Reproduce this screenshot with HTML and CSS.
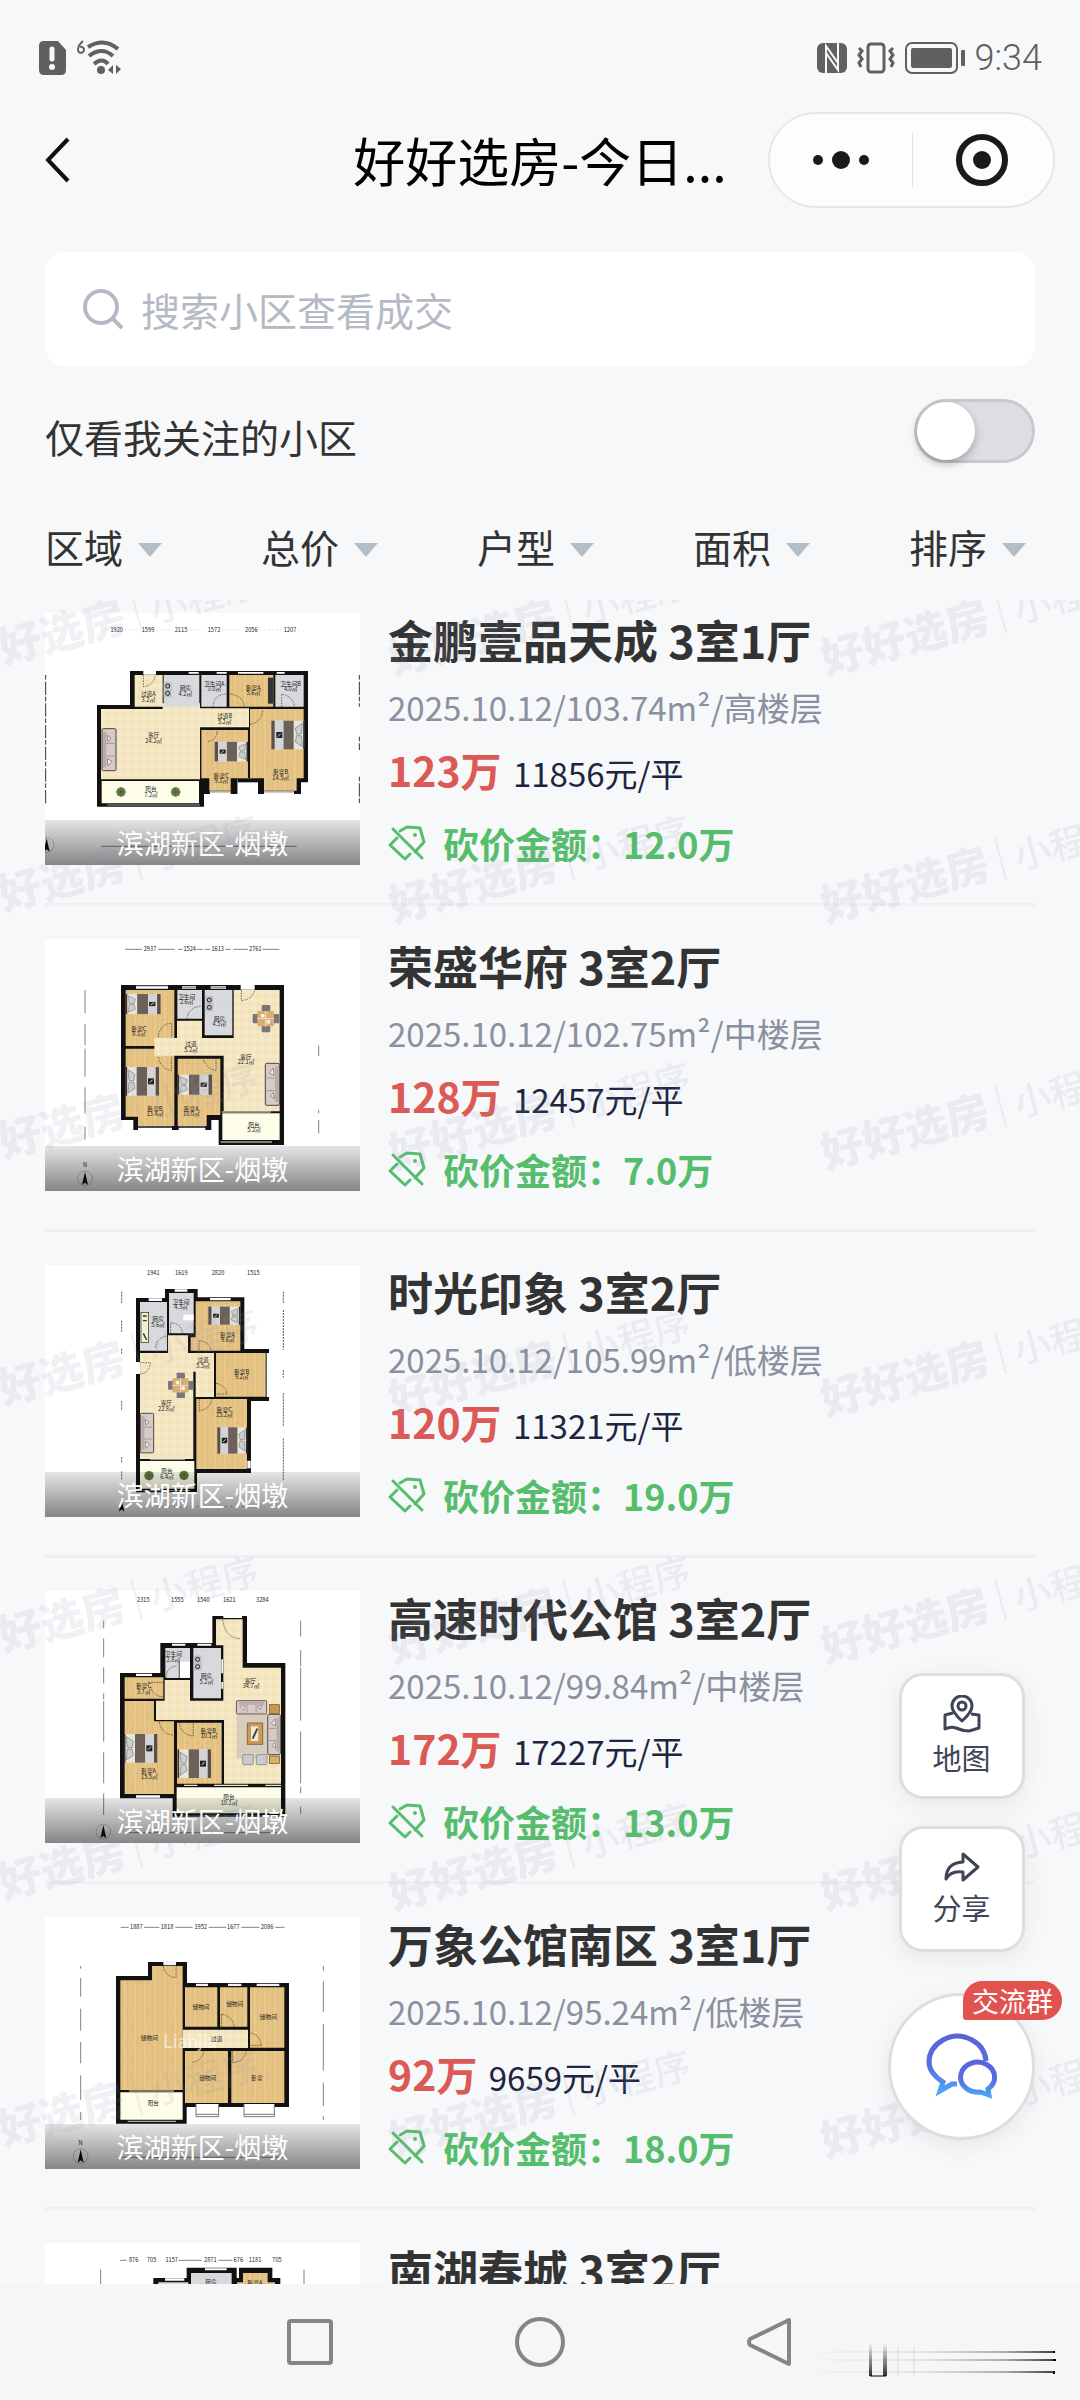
FILE: index.html
```html
<!DOCTYPE html>
<html lang="zh-CN">
<head>
  <meta charset="UTF-8">
  <meta name="viewport" content="width=device-width, initial-scale=1.0">
  <title>好好选房-今日成交</title>
  <link rel="stylesheet" href="styles.css">
</head>
<body>
<!-- shared drawings for the floor plans -->
<svg class="defs" width="0" height="0" aria-hidden="true">
  <defs>
    <pattern id="wood" width="30" height="90" patternUnits="userSpaceOnUse">
      <rect width="30" height="90" fill="#e5c384"/>
      <path d="M8 0V90M22 0V90" stroke="#dfb974" stroke-width="2"/>
      <path d="M15 0V90" stroke="#ecce94" stroke-width="3"/>
      <path d="M0 30H15M15 70H30" stroke="#d3a962" stroke-width="1"/>
    </pattern>
    <pattern id="tile" width="24" height="24" patternUnits="userSpaceOnUse">
      <rect width="24" height="24" fill="#f5e9c8"/>
      <path d="M0 12L12 0L24 12L12 24Z" fill="#f2e3bb"/>
    </pattern>
    <pattern id="grey" width="20" height="20" patternUnits="userSpaceOnUse">
      <rect width="20" height="20" fill="#d9dadd"/>
      <path d="M0 0H20M0 0V20" stroke="#cbccd1"/>
    </pattern>
    <linearGradient id="chat" x1="0" y1="0" x2="0" y2="1">
      <stop offset="0" stop-color="#5a62d8"/>
      <stop offset="0.6" stop-color="#5573e2"/>
      <stop offset="1" stop-color="#4fa3f7"/>
    </linearGradient>
    <g id="bed">
      <rect width="98" height="86" fill="#e9e5dc"/>
      <path d="M0 0V86" stroke="#3a2f2b" stroke-width="5"/>
      <path d="M5 8L26 22L22 42L8 40Z M5 78L26 64L22 46L8 46Z" fill="#c9d0d4" stroke="#777" stroke-width="2"/>
      <rect x="31" width="31" height="86" fill="#6d6058"/>
      <rect x="62" width="26" height="86" fill="#d4d4d6"/>
      <rect x="88" width="10" height="86" fill="#5b5049"/>
      <rect x="65" y="34" width="18" height="18" fill="#222"/>
      <path d="M70 47L79 38" stroke="#ddd" stroke-width="3"/>
    </g>
    <g id="sofa">
      <rect width="42" height="126" rx="4" fill="#d6cbc6" stroke="#4c4240" stroke-width="3"/>
      <rect x="3" y="10" width="10" height="106" fill="#b9aca8"/>
      <path d="M13 44H38M13 82H38" stroke="#8a7d7a" stroke-width="2"/>
      <path d="M15 20L27 28L18 38ZM16 90L30 98L18 112Z" fill="#f3efee" stroke="#6b605f" stroke-width="2"/>
    </g>
    <g id="dining">
      <rect x="27" y="0" width="26" height="82" rx="3" fill="#77777c"/>
      <rect x="0" y="27" width="80" height="28" rx="3" fill="#77777c"/>
      <rect x="14" y="18" width="50" height="46" rx="3" fill="#d9ad74"/>
      <path d="M14 41H64M39 18V64" stroke="#f3dfbd" stroke-width="3"/>
      <circle cx="30" cy="32" r="6" fill="#f8f2e4"/>
      <circle cx="47" cy="50" r="6" fill="#f8f2e4"/>
    </g>
    <g id="plant">
      <circle r="14" fill="#71844f"/>
      <path d="M0 -14V14M-14 0H14M-10 -10L10 10M-10 10L10 -10" stroke="#4e6330" stroke-width="3"/>
    </g>
    <g id="stove">
      <rect width="24" height="46" fill="#bfc0c5"/>
      <circle cx="12" cy="12" r="6" fill="none" stroke="#222" stroke-width="3"/>
      <circle cx="12" cy="34" r="6" fill="none" stroke="#222" stroke-width="3"/>
    </g>
    <g id="north">
      <circle r="22" fill="none" stroke="#666" stroke-width="1"/>
      <path d="M0 -20L9 20L0 13L-9 20Z" fill="#111"/>
    </g>
    <g id="tag" fill="none" stroke="#56bd6c" stroke-width="3" stroke-linejoin="round" stroke-linecap="round">
      <path d="M12 6L19 2L32 3L36 17L27 27"/>
      <path d="M9 13L2 20L17 34L22 29"/>
      <path d="M5 4L34 33"/>
      <circle cx="27" cy="10" r="2" fill="#56bd6c" stroke="none"/>
    </g>
  </defs>
</svg>

<div class="screen">
  <div class="status">
    <div class="status-side">
      <svg width="28" height="34" viewBox="0 0 28 34">
        <path d="M5 0H19L27 9V29Q27 34 22 34H5Q0 34 0 29V5Q0 0 5 0Z" fill="#606060"/>
        <path d="M13 8V18" stroke="#f7f8fa" stroke-width="5" stroke-linecap="round"/>
        <circle cx="13" cy="26" r="3" fill="#f7f8fa"/>
      </svg>
      <svg width="46" height="36" viewBox="0 0 46 36">
        <g fill="none" stroke="#606060">
          <path d="M6 1Q1 5 1 10A3 3 0 1 0 3 7" stroke-width="2"/>
          <path d="M11 7Q27 -3 41 9" stroke-width="4"/>
          <path d="M12 16Q25 6 36 16" stroke-width="4"/>
          <path d="M17 24Q25 17 31 24" stroke-width="4"/>
        </g>
        <circle cx="24" cy="30" r="4" fill="#606060"/>
        <path d="M36 25V34L31 30ZM39 25V34L44 29Z" fill="#606060"/>
      </svg>
    </div>
    <div class="status-side">
      <svg width="30" height="30" viewBox="0 0 30 30">
        <rect width="30" height="30" rx="6" fill="#606060"/>
        <path d="M9 30V3L21 20V9M21 0V27L9 10V21" fill="none" stroke="#f7f8fa" stroke-width="2"/>
      </svg>
      <svg width="38" height="32" viewBox="0 0 38 32" fill="none" stroke="#606060">
        <rect x="11" y="2" width="16" height="28" rx="3" stroke-width="3"/>
        <path d="M2 6L5 9L2 13L5 17L2 21L4 25M36 6L33 9L36 13L33 17L36 21L34 25" stroke-width="3"/>
      </svg>
      <svg width="60" height="32" viewBox="0 0 60 32">
        <rect x="1" y="1" width="51" height="30" rx="6" fill="none" stroke="#606060" stroke-width="2"/>
        <rect x="6" y="6" width="41" height="20" rx="2" fill="#606060"/>
        <rect x="56" y="8" width="4" height="16" rx="1" fill="#606060"/>
      </svg>
      <span class="clock">9:34</span>
    </div>
  </div>

  <header class="header">
    <button type="button" class="back" aria-label="返回">
      <svg width="26" height="46" viewBox="0 0 26 46"><path d="M23 2L3 23L23 44" fill="none" stroke="#111" stroke-width="4"/></svg>
    </button>
    <h1>好好选房-今日...</h1>
    <div class="capsule">
      <button type="button" aria-label="更多">
        <svg width="58" height="20" viewBox="0 0 58 20" fill="#1a1a1a"><circle cx="6" cy="10" r="5"/><circle cx="29" cy="10" r="9"/><circle cx="52" cy="10" r="5"/></svg>
      </button>
      <button type="button" aria-label="关闭">
        <svg width="54" height="54" viewBox="0 0 54 54"><circle cx="27" cy="27" r="23" fill="none" stroke="#1a1a1a" stroke-width="6"/><circle cx="27" cy="27" r="9" fill="#1a1a1a"/></svg>
      </button>
    </div>
  </header>

  <label class="search">
    <svg width="42" height="42" viewBox="0 0 42 42" fill="none" stroke="#b4bac4" stroke-width="4"><circle cx="19" cy="19" r="16"/><path d="M31 31L40 40"/></svg>
    <input type="search" placeholder="搜索小区查看成交" aria-label="搜索小区查看成交">
  </label>

  <div class="follow">
    <label for="follow">仅看我关注的小区</label>
    <input type="checkbox" id="follow" class="switch">
  </div>

  <div class="filters">
    <label><select aria-label="区域"><option>区域</option></select></label>
    <label><select aria-label="总价"><option>总价</option></select></label>
    <label><select aria-label="户型"><option>户型</option></select></label>
    <label><select aria-label="面积"><option>面积</option></select></label>
    <label><select aria-label="排序"><option>排序</option></select></label>
  </div>

  <main class="list">
    <article class="house">
      <div class="thumb">
        <svg viewBox="135 69 945 756">
          <path d="M390 243H924V577H903V612H882V604H792V612H774V565H713V612H692V604H630V612H612V650H291V345H390Z" fill="#111"/>
          <path d="M404 255H488V350H404ZM303 357H600V568H303ZM488 340H600V400H488ZM600 355H747V412H600Z" fill="url(#tile)"/>
          <path d="M491 255H598V350H491ZM604 255H680V350H604ZM826 255H911V350H826Z" fill="url(#grey)"/>
          <path d="M688 255H820V350H688ZM604 420H744V565H692V602H628V565H604ZM750 357H911V565H890V602H792V565H750Z" fill="url(#wood)"/>
          <path d="M713 568H774V614H713Z" fill="#fff"/>
          <path d="M713 565H774V577H713Z" fill="#111"/>
          <path d="M305 573H597V640H305Z" fill="#fdfde9"/>
          <path d="M430 243H468V254H430ZM566 246H596V251H566ZM650 246H680V251H650ZM714 246H790V251H714ZM830 246H854V251H830Z" fill="#fff"/>
          <path d="M322 645H600M628 606H692M792 606H882" stroke="#999" stroke-width="3"/>
          <g fill="none" stroke="#333" stroke-width="2" stroke-dasharray="5 3">
            <path d="M430 255V290Q460 288 466 255M640 350Q640 315 678 312M690 312Q730 318 733 350M845 350V312Q878 318 884 350M750 403Q784 398 788 362M625 455Q650 450 652 420"/>
          </g>
          <use href="#stove" transform="translate(491 276)"/>
          <rect x="804" y="263" width="15" height="78" fill="#333"/>
          <use href="#sofa" transform="translate(306 416)"/>
          <use href="#bed" transform="translate(912 478) rotate(180)"/>
          <use href="#bed" transform="translate(742 514) rotate(180) scale(1 .68)"/>
          <use href="#plant" transform="translate(363 606)"/>
          <use href="#plant" transform="translate(527 606)"/>
          <path d="M137 255V640M1078 255V350M1078 440V480M1078 560V640" stroke="#333" stroke-width="3" stroke-dasharray="14 6 40 5"/>
          <g class="plan-text">
            <text x="445" y="318">过道A</text><text x="445" y="336">3.2㎡</text>
            <text x="556" y="300">厨房</text><text x="556" y="317">4.2㎡</text>
            <text x="643" y="287">卫生间A</text><text x="643" y="304">3.0㎡</text>
            <text x="760" y="300">卧室A</text><text x="760" y="316">5.6㎡</text>
            <text x="872" y="287">卫生间B</text><text x="872" y="304">4.0㎡</text>
            <text x="674" y="385">过道B</text><text x="674" y="402">5.2㎡</text>
            <text x="461" y="441">客厅</text><text x="461" y="459">24.2㎡</text>
            <text x="664" y="563">卧室C</text><text x="664" y="580">9.1㎡</text>
            <text x="842" y="552">卧室B</text><text x="842" y="569">14.5㎡</text>
            <text x="453" y="604">阳台</text><text x="453" y="621">7.2㎡</text>
            <text x="350" y="126">1920</text><text x="444" y="126">1599</text><text x="543" y="126">2115</text><text x="642" y="126">1572</text><text x="754" y="126">2056</text><text x="870" y="126">1207</text>
          </g>
          <path d="M304 120H324M374 120H418M470 120H516M570 120H616M666 120H724M780 120H844M896 120H912" stroke="#999" stroke-dasharray="4 8"/>
          <path d="M304 769H890" stroke="#444" stroke-width="2"/>
          <use href="#north" transform="translate(140 765)"/>
        </svg>
        <span>滨湖新区-烟墩</span>
      </div>
      <div class="info">
        <h2>金鹏壹品天成 3室1厅</h2>
        <p class="meta"><span>2025.10.12</span><i>/</i><span>103.74m²</span><i>/</i><span>高楼层</span></p>
        <p class="price"><b>123万</b> 11856元/平</p>
        <p class="cut"><svg width="38" height="36" viewBox="0 0 38 36"><use href="#tag"/></svg>砍价金额：12.0万</p>
      </div>
    </article>

    <article class="house">
      <div class="thumb">
        <svg viewBox="45 57 945 756">
          <path d="M273 195H762V675H566V600H544V630H526V624H446V630H426V624H324V630H310V600H273Z" fill="#111"/>
          <path d="M287 210H433V378H287ZM287 386H433V618H324V590H287ZM443 416H571V585H530V618H443Z" fill="url(#wood)"/>
          <path d="M442 210H516V296H442ZM524 210H607V346H524Z" fill="url(#grey)"/>
          <path d="M611 210H749V574H581V354H611ZM373 354H590V407H373ZM441 302H516V360H441Z" fill="url(#tile)"/>
          <path d="M577 580H749V660H577Z" fill="#fdfde9"/>
          <path d="M318 198H414V206H318ZM456 199H498V206H456ZM542 199H588V206H542ZM632 195H674V209H632Z" fill="#fff"/>
          <path d="M318 198H414M456 203H498M542 203H588M324 621H426M446 621H526" stroke="#888" stroke-width="3"/>
          <path d="M572 666H726M575 576H722" stroke="#f4efd8" stroke-width="3"/>
          <g fill="none" stroke="#333" stroke-width="2" stroke-dasharray="5 3">
            <path d="M385 352Q390 310 425 310V352M471 296Q475 262 514 258M634 210V242Q668 238 674 210M386 412Q390 445 424 452V412M520 412Q524 445 558 452V412"/>
          </g>
          <use href="#stove" transform="translate(526 228)"/>
          <use href="#bed" transform="translate(289 222) scale(1.05 .7)"/>
          <use href="#bed" transform="translate(289 441)"/>
          <use href="#bed" transform="translate(445 464) scale(1.03 .7)"/>
          <use href="#dining" transform="translate(668 255)"/>
          <use href="#sofa" transform="translate(748 556) rotate(180)"/>
          <g class="plan-text">
            <text x="327" y="332">卧室C</text><text x="327" y="348">8.1㎡</text>
            <text x="470" y="236">卫生间</text><text x="470" y="253">2.6㎡</text>
            <text x="568" y="302">厨房</text><text x="568" y="319">4.5㎡</text>
            <text x="483" y="379">过道</text><text x="483" y="396">5.2㎡</text>
            <text x="648" y="416">客厅</text><text x="648" y="433">22.1㎡</text>
            <text x="375" y="572">卧室B</text><text x="375" y="589">13.4㎡</text>
            <text x="484" y="572">卧室A</text><text x="484" y="589">10.0㎡</text>
            <text x="672" y="620">阳台</text><text x="672" y="637">5.2㎡</text>
            <text x="360" y="94">2937</text><text x="479" y="94">1524</text><text x="563" y="94">1613</text><text x="676" y="94">2761</text>
            <text x="165" y="740">N</text>
          </g>
          <path d="M285 88H336M384 88H434M444 88H458M500 88H518M524 88H540M586 88H602M610 88H654M698 88H748M165 210V280M165 312V376M165 386V470M165 502V580M165 620V658M866 570V580M866 600V640M866 376V408" stroke="#444" stroke-width="2"/>
          <use href="#north" transform="translate(165 775)"/>
        </svg>
        <span>滨湖新区-烟墩</span>
      </div>
      <div class="info">
        <h2>荣盛华府 3室2厅</h2>
        <p class="meta"><span>2025.10.12</span><i>/</i><span>102.75m²</span><i>/</i><span>中楼层</span></p>
        <p class="price"><b>128万</b> 12457元/平</p>
        <p class="cut"><svg width="38" height="36" viewBox="0 0 38 36"><use href="#tag"/></svg>砍价金额：7.0万</p>
      </div>
    </article>

    <article class="house">
      <div class="thumb">
        <svg viewBox="45 45 945 756">
          <path d="M318 144H405V117H503V142H643V297H717V309H710V441H717V453H663V669H501V727H318V372H329V336H318Z" fill="#111"/>
          <path d="M330 156H411V302H330ZM417 129H491V250H417Z" fill="url(#grey)"/>
          <path d="M497 154H631V302H482V262H497ZM558 309H707V440H558ZM499 447H651V657H499Z" fill="url(#wood)"/>
          <path d="M330 309H414V256H474V309H552V441H497V365H490V627H330Z" fill="url(#tile)"/>
          <path d="M330 633H493V716H330Z" fill="#fdfde9"/>
          <path d="M318 337H330V372H318ZM356 145H396V153H356ZM434 118H472V125H434ZM540 144H602V151H540ZM652 632H662V655H652Z" fill="#fff"/>
          <path d="M360 629H465M340 722H480" stroke="#aaa" stroke-width="3"/>
          <g fill="none" stroke="#333" stroke-width="2" stroke-dasharray="5 3">
            <path d="M330 338H362Q356 370 330 372M376 294Q380 262 412 258M422 250V218Q455 222 458 250M507 300V272Q540 276 543 302M558 400Q586 404 590 432H558M508 447V482Q540 478 545 447"/>
          </g>
          <rect x="333" y="187" width="23" height="90" fill="#f1f0c9" stroke="#222" stroke-width="2"/>
          <path d="M339 198H350M339 212H350M340 250L350 270" stroke="#333" stroke-width="4"/>
          <rect x="460" y="194" width="31" height="17" fill="#fff"/>
          <use href="#bed" transform="translate(629 224) rotate(180) scale(.96 .63)"/>
          <use href="#bed" transform="translate(650 611) rotate(180) scale(.9 .92)"/>
          <use href="#dining" transform="translate(414 368) scale(.96 .93)"/>
          <use href="#sofa" transform="translate(331 490) scale(.95 .94)"/>
          <use href="#plant" transform="translate(357 677)"/>
          <use href="#plant" transform="translate(462 676)"/>
          <g class="plan-text">
            <text x="384" y="213">厨房</text><text x="384" y="230">5.6㎡</text>
            <text x="453" y="161">卫生间</text><text x="453" y="177">4.3㎡</text>
            <text x="593" y="260">卧室A</text><text x="593" y="276">9.6㎡</text>
            <text x="635" y="371">卧室B</text><text x="635" y="388">9.2㎡</text>
            <text x="519" y="337">过道</text><text x="519" y="353">5.5㎡</text>
            <text x="409" y="466">客厅</text><text x="409" y="483">22.8㎡</text>
            <text x="583" y="485">卧室C</text><text x="583" y="501">15.2㎡</text>
            <text x="411" y="670">阳台</text><text x="411" y="686">6.4㎡</text>
            <text x="370" y="76">1941</text><text x="454" y="76">1619</text><text x="564" y="76">2820</text><text x="670" y="76">1515</text>
          </g>
          <path d="M275 125V158M275 212V246M275 296V312M275 454V482M275 622V640M275 664V690M760 125V160M760 180V300M760 360V382M760 430V530M760 566V690" stroke="#555" stroke-width="3" stroke-dasharray="6 3"/>
          <path d="M330 770H705" stroke="#555" stroke-width="2" stroke-dasharray="5 12"/>
          <path d="M275 750L283 785L275 778L267 785Z"/>
        </svg>
        <span>滨湖新区-烟墩</span>
      </div>
      <div class="info">
        <h2>时光印象 3室2厅</h2>
        <p class="meta"><span>2025.10.12</span><i>/</i><span>105.99m²</span><i>/</i><span>低楼层</span></p>
        <p class="price"><b>120万</b> 11321元/平</p>
        <p class="cut"><svg width="38" height="36" viewBox="0 0 38 36"><use href="#tag"/></svg>砍价金额：19.0万</p>
      </div>
    </article>

    <article class="house">
      <div class="thumb">
        <svg viewBox="45 63 945 756">
          <path d="M547 138H651V279H766V740H428V685H270V309H391V219H547Z" fill="#111"/>
          <path d="M284 322H400V386H284ZM284 393H372V454H432V672H284ZM441 458H575V641H441Z" fill="url(#wood)"/>
          <path d="M406 234H480V324H406ZM490 234H573V385H490Z" fill="url(#grey)"/>
          <path d="M558 148H638V293H753V641H582V450H378V392H404V330H480V392H580V226H558Z" fill="url(#tile)"/>
          <path d="M440 652H753V730H440Z" fill="#fdfde9"/>
          <path d="M580 138H636V144H580ZM318 311H366V318H318ZM426 221H466V227H426ZM502 221H544V227H502ZM318 676H390V683H318ZM574 268H579V310H574ZM574 336H579V356H574Z" fill="#fff"/>
          <path d="M462 646H502M552 646H654M706 646H753" stroke="#eee3c0" stroke-width="4"/>
          <path d="M450 738H750" stroke="#777" stroke-width="3"/>
          <g fill="none" stroke="#333" stroke-width="2" stroke-dasharray="5 3">
            <path d="M578 150Q586 204 630 206M408 324Q410 290 440 288M355 337H400M362 350Q370 380 400 380M388 456Q394 492 428 495M448 458Q452 494 490 498V458"/>
          </g>
          <path d="M448 275V326H480" fill="none" stroke="#111" stroke-width="3"/>
          <rect x="449" y="275" width="31" height="48" fill="#fff"/>
          <use href="#stove" transform="translate(491 256)"/>
          <use href="#bed" transform="translate(284 492)"/>
          <use href="#bed" transform="translate(445 538)"/>
          <rect x="620" y="432" width="92" height="134" fill="#d6cdbd"/>
          <rect x="652" y="459" width="46" height="64" fill="#c89a58" stroke="#8c6937" stroke-width="3"/>
          <rect x="663" y="469" width="22" height="44" fill="#efe8d8"/>
          <path d="M668 506L682 476" stroke="#3d4a35" stroke-width="6"/>
          <use href="#sofa" transform="translate(710 392) rotate(90) scale(.95 .72)"/>
          <use href="#sofa" transform="translate(751 554) rotate(180) scale(.9 .96)"/>
          <rect x="718" y="404" width="30" height="26" fill="#c69853" stroke="#6b4b1d" stroke-width="2"/>
          <rect x="718" y="558" width="30" height="22" fill="#d9b06c" stroke="#6b4b1d" stroke-width="2"/>
          <rect x="638" y="554" width="32" height="30" rx="4" fill="#c9cace" stroke="#777" stroke-width="2"/>
          <rect x="679" y="554" width="32" height="30" rx="4" fill="#c9cace" stroke="#777" stroke-width="2"/>
          <g class="plan-text">
            <text x="341" y="354">卧室C</text><text x="341" y="371">3.7㎡</text>
            <text x="430" y="259">卫生间</text><text x="430" y="276">2.8㎡</text>
            <text x="529" y="325">厨房</text><text x="529" y="342">5.2㎡</text>
            <text x="661" y="338">客厅</text><text x="663" y="355">34.7㎡</text>
            <text x="535" y="488">卧室B</text><text x="537" y="504">10.1㎡</text>
            <text x="356" y="609">卧室A</text><text x="358" y="626">15.5㎡</text>
            <text x="597" y="688">阳台</text><text x="597" y="704">10.1㎡</text>
            <text x="340" y="96">2315</text><text x="442" y="96">1555</text><text x="520" y="96">1540</text><text x="598" y="96">1621</text><text x="697" y="96">3284</text>
          </g>
          <path d="M221 152V175M221 205V262M221 292V340M221 370V388M221 394V515M221 547V640M221 670V735M812 152V200M812 240V290M812 294V452M812 484V640M812 650V670M812 710V732" stroke="#444" stroke-width="2"/>
          <path d="M284 788H752" stroke="#555" stroke-width="2"/>
          <use href="#north" transform="translate(220 785)"/>
        </svg>
        <span>滨湖新区-烟墩</span>
      </div>
      <div class="info">
        <h2>高速时代公馆 3室2厅</h2>
        <p class="meta"><span>2025.10.12</span><i>/</i><span>99.84m²</span><i>/</i><span>中楼层</span></p>
        <p class="price"><b>172万</b> 17227元/平</p>
        <p class="cut"><svg width="38" height="36" viewBox="0 0 38 36"><use href="#tag"/></svg>砍价金额：13.0万</p>
      </div>
    </article>

    <article class="house">
      <div class="thumb">
        <svg viewBox="45 51 945 756">
          <path d="M354 186H471V249H777V621H470V671H258V228H354Z" fill="#111"/>
          <path d="M366 198H458V570H271V241H366ZM465 262H562V380H465ZM570 262H652V380H570ZM660 262H763V443H660ZM465 453H594V609H465ZM604 453H763V609H604Z" fill="url(#wood)"/>
          <path d="M458 389H654V444H458Z" fill="url(#tile)"/>
          <path d="M271 577H458V659H271Z" fill="#fdfde9"/>
          <path d="M400 184H438V196H400ZM498 251H534V258H498ZM594 251H634V258H594ZM680 251H748V258H680Z" fill="#f2f2f2"/>
          <path d="M293 664H438" stroke="#ccc" stroke-width="3"/>
          <path d="M297 573H432" stroke="#e9d5a4" stroke-width="3"/>
          <path d="M498 612V650H566V612M498 643H566M642 612V650H733V612M642 643H733" fill="#fff" stroke="#777" stroke-width="3"/>
          <g fill="none" stroke="#5a4420" stroke-width="2" stroke-dasharray="6 2">
            <path d="M400 198Q405 230 438 233V198M574 380V342Q610 350 613 382M656 398Q690 402 694 436H656M487 487Q518 482 522 450M608 453V488Q644 484 648 453"/>
          </g>
          <text class="plan-mark" x="480" y="444">Lianjia</text>
          <g class="plan-text">
            <text x="358" y="420">储物间</text><text x="513" y="327">储物间</text><text x="614" y="317">储物间</text><text x="715" y="356">储物间</text>
            <text x="560" y="424">过道</text><text x="533" y="540">储物间</text><text x="681" y="541">卧室</text><text x="370" y="614">阳台</text>
            <text x="319" y="88">1887</text><text x="411" y="88">1818</text><text x="512" y="88">1952</text><text x="610" y="88">1677</text><text x="711" y="88">2086</text>
            <text x="152" y="736">N</text>
          </g>
          <path d="M272 82H296M342 82H388M436 82H488M536 82H588M634 82H688M736 82H764M152 198V206M152 234V290M152 326V392M152 426V490M152 526V600M152 636V660M880 198V212M880 244V336M880 372V512M880 548V618M880 648V660" stroke="#444" stroke-width="2"/>
          <path d="M272 772H764" stroke="#555" stroke-width="2"/>
          <use href="#north" transform="translate(152 768)"/>
        </svg>
        <span>滨湖新区-烟墩</span>
      </div>
      <div class="info">
        <h2>万象公馆南区 3室1厅</h2>
        <p class="meta"><span>2025.10.12</span><i>/</i><span>95.24m²</span><i>/</i><span>低楼层</span></p>
        <p class="price"><b>92万</b> 9659元/平</p>
        <p class="cut"><svg width="38" height="36" viewBox="0 0 38 36"><use href="#tag"/></svg>砍价金额：18.0万</p>
      </div>
    </article>

    <article class="house">
      <div class="thumb">
        <svg viewBox="0 0 945 756">
          <path d="M325 105H425V74H575V105H582V74H682V105H706V400H325Z" fill="#111"/>
          <path d="M340 118H430V380H340ZM438 90H560V380H438Z" fill="url(#grey)"/>
          <path d="M594 90H668V118H690V380H576V118H594Z" fill="url(#wood)"/>
          <path d="M360 106H418V113H360ZM480 76H545V82H480Z" fill="#fff"/>
          <g class="plan-text"><text x="498" y="122">厨房</text><text x="630" y="126">卧室A</text>
            <text x="266" y="58">876</text><text x="320" y="58">705</text><text x="380" y="58">1157</text><text x="496" y="58">2871</text><text x="580" y="58">676</text><text x="630" y="58">1181</text><text x="696" y="58">705</text>
          </g>
          <path d="M225 52H245M400 52H470M520 52H562M167 80V126M777 80V126" stroke="#444" stroke-width="2"/>
        </svg>
        <span>滨湖新区-烟墩</span>
      </div>
      <div class="info">
        <h2>南湖春城 3室2厅</h2>
      </div>
    </article>

    <svg class="watermark" width="100%" height="100%" aria-hidden="true">
      <defs>
        <pattern id="mark" x="-54" y="-67" width="432" height="247" patternUnits="userSpaceOnUse">
          <g transform="translate(16 142) rotate(-15)" fill="#8a90a8" fill-opacity="0.13">
            <text x="0" y="0" font-size="43" font-weight="900">好好选房</text>
            <rect x="184" y="-38" width="2" height="44"/>
            <text x="199" y="0" font-size="37" font-weight="500">小程序</text>
          </g>
        </pattern>
      </defs>
      <rect width="100%" height="100%" fill="url(#mark)"/>
    </svg>

    <div class="floats">
      <button type="button" class="float-btn">
        <svg width="38" height="38" viewBox="0 0 38 38" fill="none" stroke="#3f4556" stroke-width="3" stroke-linejoin="round">
          <path d="M19 26Q9 17 9 11A10 10 0 0 1 29 11Q29 17 19 26Z"/>
          <circle cx="19" cy="11" r="4"/>
          <path d="M10 18L2 20V34Q8 31 13 33Q20 36 26 36L36 33V20L28 19"/>
        </svg>
        地图
      </button>
      <button type="button" class="float-btn">
        <svg width="38" height="32" viewBox="0 0 38 32" fill="none" stroke="#3f4556" stroke-width="3" stroke-linejoin="round">
          <path d="M20 3L35 16L20 29V21Q8 19 3 28Q3 12 20 11Z"/>
        </svg>
        分享
      </button>
      <button type="button" class="chat-btn" aria-label="交流群">
        <svg width="72" height="68" viewBox="0 0 72 68" fill="none" stroke="url(#chat)" stroke-width="5">
          <path d="M60 28Q59 14 46 7Q31 -1 17 7Q3 15 3 29Q3 40 17 49L14 58L26 51L31 51"/>
          <path d="M63 62L54 59A17 15 0 1 1 62 56Z"/>
        </svg>
        <span class="badge">交流群</span>
      </button>
    </div>
  </main>

  <nav class="nav">
    <button type="button" aria-label="最近任务"><svg width="50" height="50" viewBox="0 0 50 50"><rect x="4" y="4" width="42" height="42" rx="2" fill="none" stroke="#858585" stroke-width="4"/></svg></button>
    <button type="button" aria-label="主页"><svg width="50" height="50" viewBox="0 0 50 50"><circle cx="25" cy="25" r="23" fill="none" stroke="#858585" stroke-width="4"/></svg></button>
    <button type="button" aria-label="后退"><svg width="50" height="50" viewBox="0 0 50 50"><path d="M44 3V47L5 28Q3 25 5 22Z" fill="none" stroke="#858585" stroke-width="4" stroke-linejoin="round"/></svg></button>
    <svg class="streaks" width="260" height="40" viewBox="0 0 260 40" aria-hidden="true">
      <defs>
        <linearGradient id="fade"><stop offset="0" stop-opacity="0"/><stop offset="0.5" stop-opacity="0.08"/><stop offset="0.8" stop-opacity="0.3"/><stop offset="1" stop-opacity="0.75"/></linearGradient>
        <linearGradient id="tube" x1="0" y1="0" x2="0" y2="1"><stop offset="0" stop-opacity="0"/><stop offset="1" stop-opacity="0.8"/></linearGradient>
      </defs>
      <path d="M0 9H254V11H0ZM0 17H256V19H0ZM0 29H254V31H0Z" fill="url(#fade)"/>
      <path d="M69 1H72V34H69ZM83 1H87V34H83Z" fill="url(#tube)"/>
      <path d="M70 34H86" stroke="#000" stroke-width="1"/>
      <path d="M97 4H99V34H97ZM113 4H115V34H113Z" fill="#000" fill-opacity="0.05"/>
      <path d="M253 9H255V11H253ZM253 17H256V19H253ZM253 29H255V32H253Z"/>
    </svg>
  </nav>
</div>
</body>
</html>
```

FILE: styles.css
```css
* { box-sizing: border-box; }
body {
  margin: 0;
  background: #f7f8fa;
  color: #333;
  font-family: "Noto Sans CJK SC", sans-serif;
}
h1, h2, p { margin: 0; }
button {
  font: inherit;
  color: inherit;
  background: none;
  border: none;
  padding: 0;
  cursor: pointer;
}
svg { display: block; flex: none; }
.defs { position: absolute; }
.screen {
  display: flex;
  flex-direction: column;
  height: 100vh;
}

/* status bar */
.status {
  display: flex;
  justify-content: space-between;
  padding: 36px 38px 32px 39px;
}
.status-side {
  display: flex;
  align-items: center;
  gap: 10px;
  height: 44px;
}
.clock {
  font-family: Roboto, sans-serif;
  font-size: 36px;
  font-weight: 300;
  color: #606060;
}

.header {
  display: grid;
  grid-template-columns: 287px 1fr 287px;
  align-items: center;
  padding: 0 25px;
}
.back { justify-self: start; padding: 20px; }
.header h1 {
  font-size: 52px;
  line-height: 60px;
  font-weight: 400;
  color: #000;
  text-align: center;
  white-space: nowrap;
}
.capsule {
  display: flex;
  height: 96px;
  background: #fdfdfd;
  border: 2px solid #e6e7e9;
  border-radius: 48px;
}
.capsule button {
  flex: 1;
  display: flex;
  align-items: center;
  justify-content: center;
  position: relative;
}
.capsule button + button::before {
  content: "";
  position: absolute;
  left: 0;
  top: 18px;
  bottom: 18px;
  width: 1px;
  background: #e2e3e5;
}

.search {
  display: flex;
  align-items: center;
  gap: 17px;
  height: 114px;
  margin: 44px 45px 0;
  padding: 0 37px;
  background: #fff;
  border-radius: 20px;
}
.search input {
  flex: 1;
  min-width: 0;
  border: none;
  outline: none;
  padding: 0;
  background: none;
  font: inherit;
  font-size: 39px;
}
.search input::placeholder { color: #b4bac4; opacity: 1; }

.follow {
  display: flex;
  justify-content: space-between;
  align-items: center;
  height: 64px;
  margin: 33px 45px 0;
  font-size: 39px;
}
.follow label { padding-top: 10px; }
.switch {
  appearance: none;
  width: 121px;
  height: 64px;
  margin: 0;
  border: 3px solid #c8c9cd;
  border-radius: 32px;
  background: #dddee3;
}
.switch::before {
  content: "";
  display: block;
  width: 58px;
  height: 58px;
  border-radius: 50%;
  background: #fff;
  box-shadow: 0 4px 8px rgba(0, 0, 0, 0.25);
}
.switch:checked { background: #56bd6c; }
.switch:checked::before { margin-left: auto; }

.filters {
  display: flex;
  justify-content: space-between;
  padding: 56px 54px 27px 45px;
}
.filters label {
  display: flex;
  align-items: center;
  gap: 14px;
}
.filters label::after {
  content: "";
  margin-top: 8px;
  border: 12px solid transparent;
  border-top: 14px solid #b3bdc5;
  border-bottom: 0;
}
.filters select {
  appearance: none;
  border: none;
  padding: 0;
  background: none;
  color: #333;
  font: inherit;
  font-size: 39px;
  line-height: 54px;
  height: 54px;
}

/* house list */
.list {
  position: relative;
  flex: 1;
  min-height: 0;
  overflow: hidden;
  padding: 0 45px;
}
.house {
  display: flex;
  gap: 28px;
  padding: 33px 0 38px;
  border-bottom: 3px solid #eff0f2;
}
.house:first-child { margin-top: -20px; }
.thumb {
  position: relative;
  flex: none;
  width: 315px;
  height: 252px;
  background: #fff;
}
.thumb svg { width: 100%; height: 100%; }
.thumb span {
  position: absolute;
  left: 0;
  right: 0;
  bottom: 0;
  line-height: 45px;
  font-size: 27px;
  color: #fff;
  text-align: center;
  background: linear-gradient(rgba(0, 0, 0, 0.1), rgba(0, 0, 0, 0.48));
}
.plan-text {
  font-size: 17px;
  fill: #222;
  text-anchor: middle;
}
.plan-mark {
  font-family: Lato, sans-serif;
  font-size: 58px;
  fill: #fff;
  fill-opacity: 0.6;
  text-anchor: middle;
}
.info { white-space: nowrap; }
.info h2 {
  font-size: 45px;
  line-height: 54px;
  font-weight: 700;
}
.meta {
  display: flex;
  margin-top: 20px;
  font-size: 33px;
  line-height: 40px;
  color: #8b90a0;
}
.meta i { font-style: normal; }
.price {
  margin-top: 20px;
  font-size: 33px;
  line-height: 44px;
  color: #1d2540;
}
.price b {
  margin-right: 4px;
  font-size: 41px;
  color: #dc5a55;
}
.cut {
  display: flex;
  align-items: center;
  gap: 17px;
  margin-top: 28px;
  font-size: 36px;
  line-height: 40px;
  font-weight: 700;
  color: #56bd6c;
}
.watermark {
  position: absolute;
  left: 0;
  top: 0;
  pointer-events: none;
}

/* floating buttons */
.floats {
  position: absolute;
  right: 45px;
  bottom: 144px;
  display: flex;
  flex-direction: column;
  align-items: center;
  gap: 27px;
}
.float-btn {
  display: flex;
  flex-direction: column;
  align-items: center;
  justify-content: center;
  gap: 4px;
  width: 126px;
  height: 126px;
  border: 3px solid #dddee1;
  border-radius: 24px;
  background: #fff;
  box-shadow: 0 6px 24px rgba(0, 0, 0, 0.07);
  color: #3f4556;
  font-size: 29px;
  line-height: 40px;
}
.chat-btn {
  position: relative;
  display: flex;
  align-items: center;
  justify-content: center;
  width: 147px;
  height: 147px;
  margin-top: 14px;
  border: 3px solid #dddee1;
  border-radius: 50%;
  background: #fff;
  box-shadow: 0 6px 24px rgba(0, 0, 0, 0.07);
}
.badge {
  position: absolute;
  top: -15px;
  left: 72px;
  padding: 0 9px;
  border-radius: 20px 20px 20px 3px;
  background: #e2524e;
  color: #fff;
  font-size: 27px;
  line-height: 39px;
  white-space: nowrap;
}

/* system navigation */
.nav {
  position: relative;
  display: grid;
  grid-template-columns: repeat(3, 1fr);
  justify-items: center;
  align-items: center;
  height: 116px;
  padding: 0 18%;
  background: #f6f6f6;
}
.streaks {
  position: absolute;
  right: 20px;
  bottom: 18px;
}
```
